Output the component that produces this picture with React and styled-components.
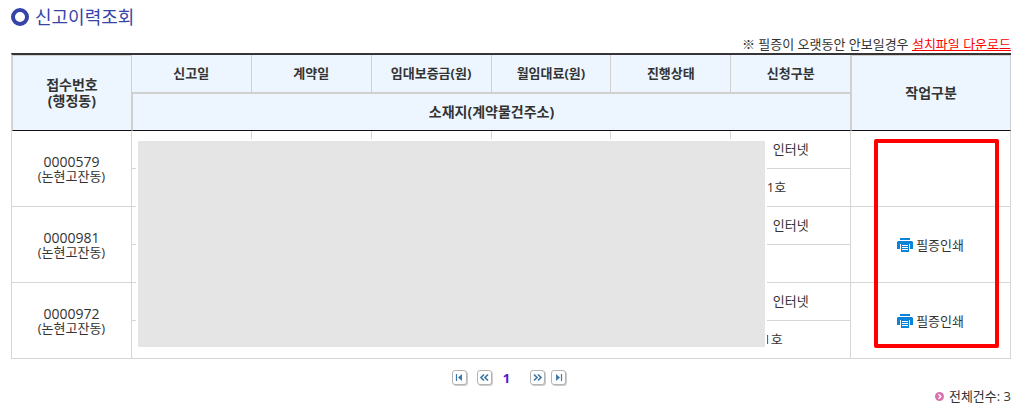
import React from "react";
import styled, { createGlobalStyle } from "styled-components";

const GlobalStyle = createGlobalStyle`
  * { box-sizing: border-box; }
  body {
    margin: 0;
    background: #fff;
    color: #333;
    font: 13px/15px "Open Sans", "Noto Sans CJK KR", sans-serif;
  }
`;

const Page = styled.main`
  padding: 6px 18px 0 11px;
`;

const TitleBar = styled.header`
  display: flex;
  align-items: center;
  gap: 6px;
  height: 22px;
`;

const Title = styled.h1`
  margin: 0;
  color: #3644a8;
  font-size: 18px;
  line-height: 22px;
  font-weight: 400;
`;

const Notice = styled.p`
  margin: 8px 0 0;
  height: 17px;
  line-height: 17px;
  text-align: right;
`;

const DownloadLink = styled.a`
  color: #f00;
  text-decoration: underline;
`;

const TableArea = styled.section`
  position: relative;
`;

const Table = styled.table`
  width: 100%;
  table-layout: fixed;
  border-collapse: separate;
  border-spacing: 0;
  border-top: 2px solid #373435;
  border-left: 1px solid #d6d6d6;
`;

const Col = styled.col`
  width: ${(p) => (p.$wide ? "16%" : "12%")};
`;

const Th = styled.th`
  height: 38px;
  padding: ${(p) => (p.$major ? "0" : "0 0 2px")};
  background: #edf6fe;
  border: 0 solid #d0d0d0;
  border-right-width: 1px;
  border-bottom-width: 1px;
  font-size: ${(p) => (p.$major ? "14px" : "13px")};
  line-height: 16px;
  font-weight: 700;
  ${(p) => p.$major && "border-top-width: 1px; border-left-width: 1px; border-bottom-color: #111;"}
`;

const Td = styled.td`
  height: 38px;
  padding: 0;
  border: 0 solid #d6d6d6;
  border-right-width: 1px;
  border-bottom-width: 1px;
  text-align: center;
`;

const AddressTd = styled(Td)`
  padding-right: 64px;
  text-align: right;
`;

const ReceiptNo = styled.span`
  display: block;
  font-size: 14px;
`;

const PrintLink = styled.a`
  display: inline-flex;
  align-items: center;
  gap: 3px;
  color: #333;
  text-decoration: none;
  vertical-align: middle;
`;

const Mask = styled.div`
  position: absolute;
  top: 86px;
  bottom: 10px;
  left: calc(12% + 5px);
  right: calc(16% + 84px);
  background: #e5e5e5;
  border: 2px solid #fff;
`;

const Highlight = styled.div`
  position: absolute;
  top: 86px;
  bottom: 11px;
  left: calc(84% + 23px);
  right: 12px;
  border: 4px solid #f00;
  border-radius: 2px;
  pointer-events: none;
`;

const Pager = styled.nav`
  display: flex;
  justify-content: center;
  align-items: center;
  height: 16px;
  margin: 11px 3px 0 0;
`;

const PagerGroup = styled.div`
  display: flex;
  gap: ${(p) => p.$gap};
`;

const PageButton = styled.button`
  display: block;
  width: 16px;
  height: 16px;
  padding: 0;
  border: 0;
  background: none;
  cursor: pointer;
`;

const CurrentPage = styled.strong`
  width: 37px;
  padding-right: 10px;
  color: #5512d0;
  text-align: center;
`;

const Total = styled.p`
  display: flex;
  justify-content: flex-end;
  align-items: center;
  gap: 5px;
  margin: 3px 0 0;
`;

const Icon = styled.svg`
  display: block;
  flex: none;
`;

function RingIcon() {
  return (
    <Icon width="18" height="18" viewBox="0 0 18 18" aria-hidden="true">
      <circle cx="9" cy="9" r="7" fill="none" stroke="#3644a8" strokeWidth="4" />
    </Icon>
  );
}

function PrinterIcon() {
  return (
    <Icon width="16" height="14" viewBox="0 0 16 14" aria-hidden="true">
      <path fill="#0a84d8" d="M3 0h10v2H3zM1 3h14l1 1v7h-3V6H3v5H0V4z" />
      <path fill="#0a84d8" d="M4 6h8v8H4z" />
      <path fill="#fff" d="M5 7h6v1H5zM5 9h6v1H5zM5 11h6v1H5zM3 6h1v5H3zM12 6h1v5h-1z" />
    </Icon>
  );
}

function BulletIcon() {
  return (
    <Icon width="9" height="9" viewBox="0 0 9 9" aria-hidden="true">
      <circle cx="4.5" cy="4.5" r="4.5" fill="#db70ae" />
      <path d="M3.5 2.2l2.3 2.3-2.3 2.3" fill="none" stroke="#fff" strokeWidth="1.5" />
    </Icon>
  );
}

const glyphs = {
  first: <><path d="M4.5 4v7" /><path d="M10 4v7L6 7.5z" fill="#3f78a4" stroke="none" /></>,
  prev: <path d="M7 4.5l-3 3 3 3M11 4.5l-3 3 3 3" />,
  next: <path d="M4 4.5l3 3-3 3M8 4.5l3 3-3 3" />,
  last: <><path d="M10.5 4v7" /><path d="M5 4v7l4-3.5z" fill="#3f78a4" stroke="none" /></>,
};

function PagerButton({ kind, label }) {
  return (
    <PageButton type="button" aria-label={label}>
      <Icon width="16" height="16" viewBox="0 0 16 16" aria-hidden="true">
        <rect x="1.5" y="1.5" width="14" height="14" rx="2.5" fill="#ccc" stroke="#ccc" />
        <rect x="0.5" y="0.5" width="14" height="14" rx="2.5" fill="#fff" stroke="#b5b5b5" />
        <g fill="none" stroke="#3f78a4" strokeWidth={kind === "prev" || kind === "next" ? 1.7 : 1.2}>
          {glyphs[kind]}
        </g>
      </Icon>
    </PageButton>
  );
}

const topColumns = ["신고일", "계약일", "임대보증금(원)", "월임대료(원)", "진행상태", "신청구분"];

const reports = [
  { no: "0000579", dong: "(논현고잔동)", type: "인터넷", address: "1호", printable: false },
  { no: "0000981", dong: "(논현고잔동)", type: "인터넷", address: "", printable: true },
  { no: "0000972", dong: "(논현고잔동)", type: "인터넷", address: "1호\u00a0", printable: true },
];

function ReportRows({ report }) {
  return (
    <>
      <tr>
        <Td rowSpan={2}>
          <ReceiptNo>{report.no}</ReceiptNo>
          {report.dong}
        </Td>
        <Td /><Td /><Td /><Td /><Td />
        <Td>{report.type}</Td>
        <Td rowSpan={2}>
          {report.printable && (
            <PrintLink href="#print">
              <PrinterIcon />
              필증인쇄
            </PrintLink>
          )}
        </Td>
      </tr>
      <tr>
        <AddressTd colSpan={6}>{report.address}</AddressTd>
      </tr>
    </>
  );
}

export default function App() {
  return (
    <Page>
      <GlobalStyle />
      <TitleBar>
        <RingIcon />
        <Title>신고이력조회</Title>
      </TitleBar>
      <Notice>
        ※ 필증이 오랫동안 안보일경우 <DownloadLink href="#download">설치파일 다운로드</DownloadLink>
      </Notice>
      <TableArea>
        <Table>
          <colgroup>
            {[0, 1, 2, 3, 4, 5, 6].map((i) => <Col key={i} />)}
            <Col $wide />
          </colgroup>
          <thead>
            <tr>
              <Th $major rowSpan={2}>접수번호<br />(행정동)</Th>
              {topColumns.map((name) => <Th key={name}>{name}</Th>)}
              <Th $major rowSpan={2}>작업구분</Th>
            </tr>
            <tr>
              <Th $major colSpan={6}>소재지(계약물건주소)</Th>
            </tr>
          </thead>
          <tbody>
            {reports.map((report) => <ReportRows key={report.no} report={report} />)}
          </tbody>
        </Table>
        <Mask />
        <Highlight />
      </TableArea>
      <Pager aria-label="페이지">
        <PagerGroup $gap="9px">
          <PagerButton kind="first" label="처음" />
          <PagerButton kind="prev" label="이전" />
        </PagerGroup>
        <CurrentPage>1</CurrentPage>
        <PagerGroup $gap="5px">
          <PagerButton kind="next" label="다음" />
          <PagerButton kind="last" label="마지막" />
        </PagerGroup>
      </Pager>
      <Total>
        <BulletIcon />
        전체건수: 3
      </Total>
    </Page>
  );
}
